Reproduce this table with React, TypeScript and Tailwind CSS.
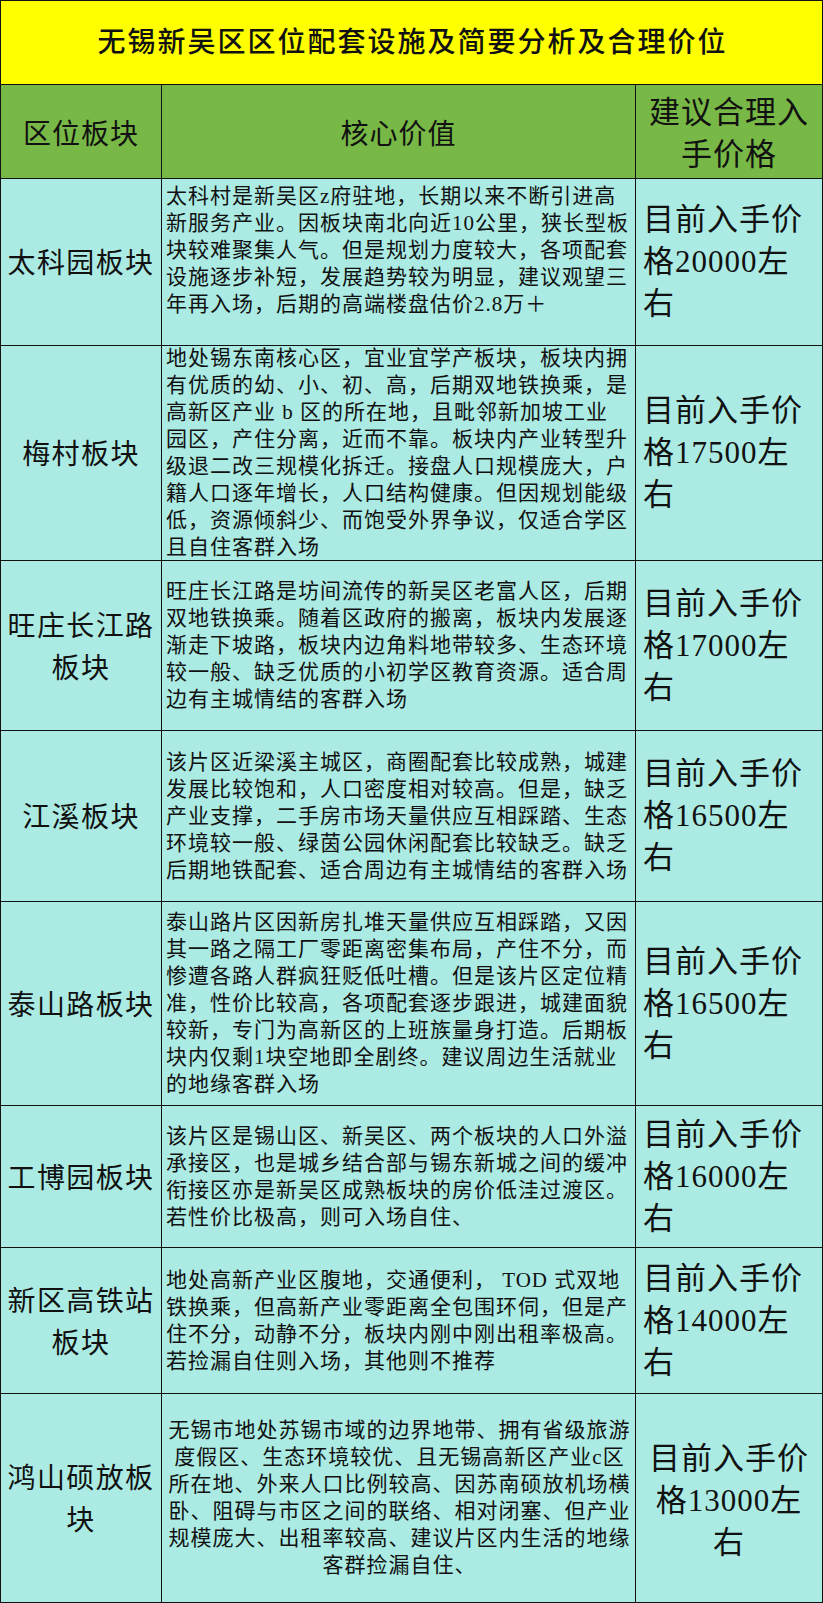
const font = { fontFamily: '"Liberation Serif", "Noto Sans CJK SC", serif' };

type Row = {
  name: string[];
  desc: string[];
  price: string;
  h: string;
  top?: boolean;
  center?: boolean;
};

const rows: Row[] = [
  {
    name: ["太科园板块"],
    desc: [
      "太科村是新吴区z府驻地，长期以来不断引进高",
      "新服务产业。因板块南北向近10公里，狭长型板",
      "块较难聚集人气。但是规划力度较大，各项配套",
      "设施逐步补短，发展趋势较为明显，建议观望三",
      "年再入场，后期的高端楼盘估价2.8万＋",
    ],
    price: "20000",
    h: "h-[167px]",
    top: true,
  },
  {
    name: ["梅村板块"],
    desc: [
      "地处锡东南核心区，宜业宜学产板块，板块内拥",
      "有优质的幼、小、初、高，后期双地铁换乘，是",
      "高新区产业 b 区的所在地，且毗邻新加坡工业",
      "园区，产住分离，近而不靠。板块内产业转型升",
      "级退二改三规模化拆迁。接盘人口规模庞大，户",
      "籍人口逐年增长，人口结构健康。但因规划能级",
      "低，资源倾斜少、而饱受外界争议，仅适合学区",
      "且自住客群入场",
    ],
    price: "17500",
    h: "h-[215px]",
  },
  {
    name: ["旺庄长江路", "板块"],
    desc: [
      "旺庄长江路是坊间流传的新吴区老富人区，后期",
      "双地铁换乘。随着区政府的搬离，板块内发展逐",
      "渐走下坡路，板块内边角料地带较多、生态环境",
      "较一般、缺乏优质的小初学区教育资源。适合周",
      "边有主城情结的客群入场",
    ],
    price: "17000",
    h: "h-[170px]",
  },
  {
    name: ["江溪板块"],
    desc: [
      "该片区近梁溪主城区，商圈配套比较成熟，城建",
      "发展比较饱和，人口密度相对较高。但是，缺乏",
      "产业支撑，二手房市场天量供应互相踩踏、生态",
      "环境较一般、绿茵公园休闲配套比较缺乏。缺乏",
      "后期地铁配套、适合周边有主城情结的客群入场",
    ],
    price: "16500",
    h: "h-[171px]",
  },
  {
    name: ["泰山路板块"],
    desc: [
      "泰山路片区因新房扎堆天量供应互相踩踏，又因",
      "其一路之隔工厂零距离密集布局，产住不分，而",
      "惨遭各路人群疯狂贬低吐槽。但是该片区定位精",
      "准，性价比较高，各项配套逐步跟进，城建面貌",
      "较新，专门为高新区的上班族量身打造。后期板",
      "块内仅剩1块空地即全剧终。建议周边生活就业",
      "的地缘客群入场",
    ],
    price: "16500",
    h: "h-[204px]",
  },
  {
    name: ["工博园板块"],
    desc: [
      "该片区是锡山区、新吴区、两个板块的人口外溢",
      "承接区，也是城乡结合部与锡东新城之间的缓冲",
      "衔接区亦是新吴区成熟板块的房价低洼过渡区。",
      "若性价比极高，则可入场自住、",
    ],
    price: "16000",
    h: "h-[142px]",
  },
  {
    name: ["新区高铁站", "板块"],
    desc: [
      "地处高新产业区腹地，交通便利， TOD 式双地",
      "铁换乘，但高新产业零距离全包围环伺，但是产",
      "住不分，动静不分，板块内刚中刚出租率极高。",
      "若捡漏自住则入场，其他则不推荐",
    ],
    price: "14000",
    h: "h-[146px]",
  },
  {
    name: ["鸿山硕放板", "块"],
    desc: [
      "无锡市地处苏锡市域的边界地带、拥有省级旅游",
      "度假区、生态环境较优、且无锡高新区产业c区",
      "所在地、外来人口比例较高、因苏南硕放机场横",
      "卧、阻碍与市区之间的联络、相对闭塞、但产业",
      "规模庞大、出租率较高、建议片区内生活的地缘",
      "客群捡漏自住、",
    ],
    price: "13000",
    h: "h-[208px]",
    center: true,
  },
];

export default function App() {
  return (
    <div className="w-[823px] h-[1603px] bg-[#abebe3] border border-[#111] text-[#111] flex flex-col" style={font}>
      <div className="h-[84px] shrink-0 bg-[#ffff00] border-b border-[#111] flex items-center justify-center">
        <span className="text-[28px] tracking-[2px] font-medium leading-none pl-[2px]">无锡新吴区区位配套设施及简要分析及合理价位</span>
      </div>

      <div className="h-[94px] shrink-0 bg-[#78b846] border-b border-[#111] flex">
        <div className="w-[161px] border-r border-[#111] flex items-center justify-center pt-[6px]">
          <span className="text-[28px] tracking-[1px] leading-none">区位板块</span>
        </div>
        <div className="w-[474px] border-r border-[#111] flex items-center justify-center pt-[6px]">
          <span className="text-[28px] tracking-[1px] leading-none">核心价值</span>
        </div>
        <div className="flex-1 flex flex-col items-center justify-center text-[31px] tracking-[1px] leading-[42px] pt-[4px]">
          <span>建议合理入</span>
          <span>手价格</span>
        </div>
      </div>

      {rows.map((row, i) => (
        <div
          key={i}
          className={`${row.h} shrink-0 flex ${i < rows.length - 1 ? "border-b border-[#111]" : ""}`}
        >
          <div className="w-[161px] border-r border-[#111] flex flex-col items-center justify-center text-[28px] tracking-[1.4px] leading-[42px] pt-[4px]">
            {row.name.map((n) => (
              <span key={n}>{n}</span>
            ))}
          </div>
          <div
            className={`w-[474px] border-r border-[#111] flex flex-col px-[4px] text-[21px] tracking-[1px] leading-[27px] whitespace-nowrap ${
              row.top ? "justify-start pt-[4px]" : "justify-center"
            } ${row.center ? "items-center pl-[6px]" : "items-start"}`}
          >
            {row.desc.map((d) => (
              <span key={d}>{d}</span>
            ))}
          </div>
          <div
            className={`flex-1 flex flex-col justify-center text-[31px] tracking-[1px] leading-[42px] whitespace-nowrap ${
              row.center ? "items-center pt-[6px]" : "items-start pl-[7px]"
            }`}
          >
            <span>目前入手价</span>
            <span>格{row.price}左</span>
            <span>右</span>
          </div>
        </div>
      ))}
    </div>
  );
}
